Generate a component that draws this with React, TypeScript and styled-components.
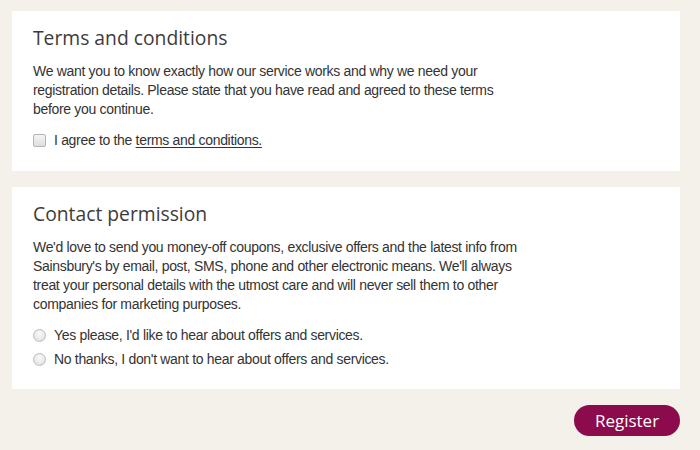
import styled, { createGlobalStyle } from "styled-components";

const GlobalStyle = createGlobalStyle`
  html, body {
    margin: 0;
    padding: 0;
    background: #f3f1ea;
  }
  body {
    font-family: "Liberation Sans", Arial, sans-serif;
  }
`;

const Page = styled.main`
  width: 700px;
  height: 450px;
  box-sizing: border-box;
  padding: 11px 20px 0 12px;
  display: flex;
  flex-direction: column;
  gap: 16px;
`;

const Card = styled.section<{ $bottom: number }>`
  background: #ffffff;
  padding: 14px 21px ${(p) => p.$bottom}px;
`;

const Title = styled.h2`
  margin: 0 0 11px;
  font-family: "Open Sans", "Noto Sans", sans-serif;
  font-weight: 400;
  font-size: 19.3px;
  line-height: 26px;
  color: #3c3c3c;
`;

const Text = styled.p`
  margin: 0;
  max-width: 496px;
  font-size: 14px;
  letter-spacing: -0.32px;
  line-height: 19px;
  color: #333333;
`;

const Options = styled.div`
  margin-top: 12px;
  display: flex;
  flex-direction: column;
  gap: 5px;
`;

const Option = styled.label`
  display: flex;
  align-items: center;
  gap: 8px;
  font-size: 14px;
  letter-spacing: -0.32px;
  line-height: 19px;
  color: #333333;
`;

const Box = styled.input`
  appearance: none;
  margin: 0;
  width: 13px;
  height: 13px;
  border: 1px solid #b4b4b4;
  border-radius: 2px;
  background: linear-gradient(#f4f4f4, #dedede);
  box-sizing: border-box;
  flex: none;
`;

const Radio = styled(Box)`
  border-radius: 50%;
  border-color: #bcbcbc;
  background: radial-gradient(circle at 50% 35%, #fafafa, #dcdcdc);
`;

const Link = styled.a`
  color: #333333;
  text-decoration: underline;
  text-underline-offset: 2px;
`;

const Footer = styled.div`
  display: flex;
  justify-content: flex-end;
`;

const RegisterButton = styled.button`
  width: 106px;
  height: 31px;
  border: none;
  border-radius: 16px;
  background: #8c0b4d;
  color: #ffffff;
  font-family: "Open Sans", "Noto Sans", sans-serif;
  font-size: 17px;
  padding: 0;
  cursor: pointer;
`;

export default function App() {
  return (
    <>
      <GlobalStyle />
      <Page>
        <Card $bottom={21}>
          <Title>Terms and conditions</Title>
          <Text>
            We want you to know exactly how our service works and why we need your
            registration details. Please state that you have read and agreed to these
            terms before you continue.
          </Text>
          <Options>
            <Option>
              <Box type="checkbox" />
              <span>
                I agree to the <Link href="#">terms and conditions.</Link>
              </span>
            </Option>
          </Options>
        </Card>
        <Card $bottom={20}>
          <Title>Contact permission</Title>
          <Text>
            We'd love to send you money-off coupons, exclusive offers and the latest
            info from Sainsbury's by email, post, SMS, phone and other electronic
            means. We'll always treat your personal details with the utmost care and
            will never sell them to other companies for marketing purposes.
          </Text>
          <Options>
            <Option>
              <Radio type="radio" name="contact" />
              Yes please, I'd like to hear about offers and services.
            </Option>
            <Option>
              <Radio type="radio" name="contact" />
              No thanks, I don't want to hear about offers and services.
            </Option>
          </Options>
        </Card>
        <Footer>
          <RegisterButton>Register</RegisterButton>
        </Footer>
      </Page>
    </>
  );
}
